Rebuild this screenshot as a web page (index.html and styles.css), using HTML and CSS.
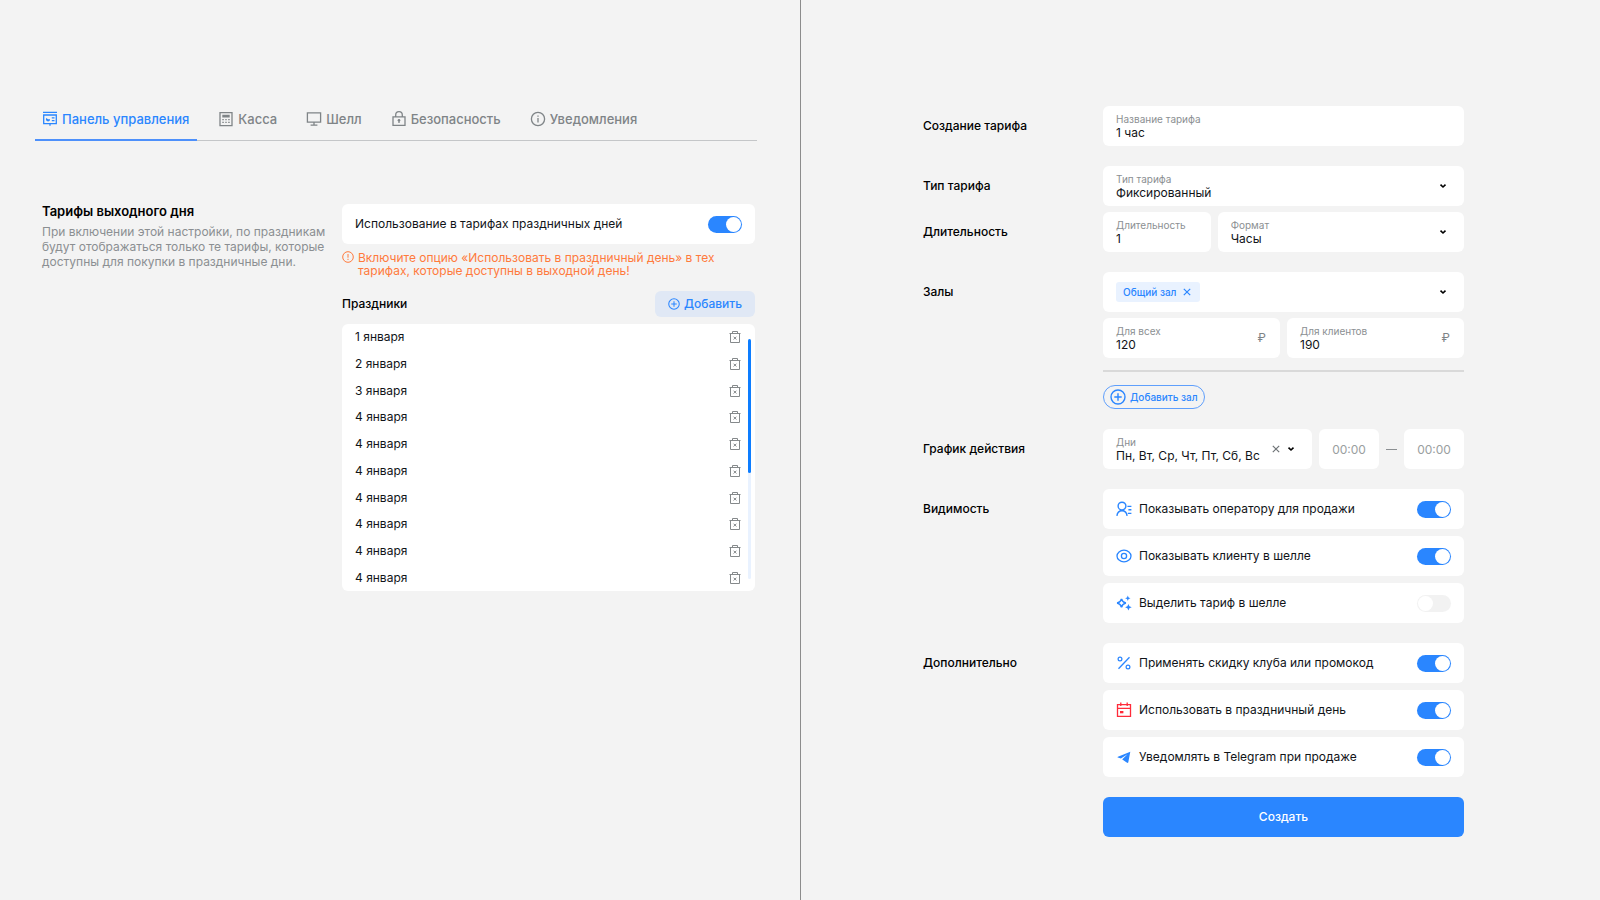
FILE: index.html
```html
<!DOCTYPE html>
<html lang="ru">
<head>
<meta charset="utf-8">
<meta name="viewport" content="width=device-width, initial-scale=1">
<title>Тарифы выходного дня</title>
<link rel="stylesheet" href="styles.css">
</head>
<body>
<svg class="sprite" aria-hidden="true">
  <symbol id="trash" viewBox="0 0 12 12"><path d="M0.500 2.500h11M3.500 2.500v-2h5v2M1.500 2.500v9h9v-9M4.600 5.700l2.800 2.800M7.400 5.700L4.600 8.500" fill="none" stroke="currentColor"/></symbol>
  <symbol id="chevron" viewBox="0 0 8 6"><path d="M1.500 1.600L4 4l2.500-2.400" fill="none" stroke="currentColor" stroke-width="1.600"/></symbol>
  <symbol id="plus" viewBox="0 0 16 16"><path d="M8 4.300v7.400M4.300 8h7.400M15 8A7 7 0 1 1 1 8a7 7 0 0 1 14 0z" fill="none" stroke="currentColor" stroke-width="1.400"/></symbol>
  <symbol id="cross" viewBox="0 0 8 8"><path d="M0.800 0.800l6.400 6.400M7.200 0.800L0.800 7.200" fill="none" stroke="currentColor" stroke-width="1.200"/></symbol>
</svg>
<div class="page">
  <main class="pane pane-settings">
    <nav class="tabs">
      <a class="tab tab-active" href="#panel"><svg class="icon" viewBox="0 0 16 16"><path d="M1 1.400h14M1.700 4h12.600v8.600H1.700zM8 12.600v2.200M9.800 6.800h2.700M9.800 9.600h2.700" fill="none" stroke="currentColor" stroke-width="1.300"/><path d="M6 6.200v2h2.100A2.100 2.100 0 1 1 4.300 7.100L6 8.200z" fill="currentColor"/></svg>Панель управления</a>
      <a class="tab" href="#cash"><svg class="icon" viewBox="0 0 16 16"><path d="M2 1.600h12v13H2z" fill="none" stroke="currentColor" stroke-width="1.300"/><path d="M4.300 3.800h7.400v2.600H4.300zM4.300 8h1.500v1.200H4.300zM7.300 8h1.400v1.200H7.300zM10.200 8h1.500v1.200h-1.500zM4.300 10.800h1.500V12H4.300zM7.300 10.800h1.400V12H7.300zM10.200 10.800h1.500V12h-1.500z" fill="currentColor"/></svg>Касса</a>
      <a class="tab" href="#shell"><svg class="icon" viewBox="0 0 16 16"><path d="M1.400 1.900h13.200v9.200H1.400zM8 11.100v3M4.600 14.100h6.800" fill="none" stroke="currentColor" stroke-width="1.300"/></svg>Шелл</a>
      <a class="tab" href="#security"><svg class="icon" viewBox="0 0 16 16"><path d="M2 5.800h12v8.600H2zM4.700 5.800V4a3.300 3.300 0 0 1 6.600 0v1.800M8 9.200V12" fill="none" stroke="currentColor" stroke-width="1.300"/><circle cx="8" cy="9.200" r="1.300" fill="currentColor"/></svg>Безопасность</a>
      <a class="tab" href="#notify"><svg class="icon" viewBox="0 0 16 16"><circle cx="8" cy="8" r="6.600" fill="none" stroke="currentColor" stroke-width="1.300"/><path d="M8 7v4.400M8 4.400v1.400" stroke="currentColor" stroke-width="1.300"/></svg>Уведомления</a>
    </nav>
    <section class="settings">
      <div class="about">
        <h1 class="title">Тарифы выходного дня</h1>
        <p class="lead">При включении этой настройки, по праздникам будут отображаться только те тарифы, которые доступны для покупки в праздничные дни.</p>
      </div>
      <div class="holidays">
        <label class="card option"><span class="option-text">Использование в тарифах праздничных дней</span><input class="switch" type="checkbox" checked></label>
        <div class="warning"><svg class="icon-small" viewBox="0 0 12 12"><circle cx="6" cy="6" r="5.300" fill="none" stroke="currentColor"/><path d="M6 3v3.700M6 7.800V9" stroke="currentColor"/></svg><p class="warning-text">Включите опцию «Использовать в праздничный день» в тех тарифах, которые доступны в выходной день!</p></div>
        <div class="list-head">
          <h2 class="subtitle">Праздники</h2>
          <button class="add" type="button"><svg class="icon-small"><use href="#plus"/></svg>Добавить</button>
        </div>
        <div class="card list-card">
          <ul class="list">
            <li class="list-row">1 января<button class="remove" type="button" aria-label="Удалить"><svg class="icon-small"><use href="#trash"/></svg></button></li>
            <li class="list-row">2 января<button class="remove" type="button" aria-label="Удалить"><svg class="icon-small"><use href="#trash"/></svg></button></li>
            <li class="list-row">3 января<button class="remove" type="button" aria-label="Удалить"><svg class="icon-small"><use href="#trash"/></svg></button></li>
            <li class="list-row">4 января<button class="remove" type="button" aria-label="Удалить"><svg class="icon-small"><use href="#trash"/></svg></button></li>
            <li class="list-row">4 января<button class="remove" type="button" aria-label="Удалить"><svg class="icon-small"><use href="#trash"/></svg></button></li>
            <li class="list-row">4 января<button class="remove" type="button" aria-label="Удалить"><svg class="icon-small"><use href="#trash"/></svg></button></li>
            <li class="list-row">4 января<button class="remove" type="button" aria-label="Удалить"><svg class="icon-small"><use href="#trash"/></svg></button></li>
            <li class="list-row">4 января<button class="remove" type="button" aria-label="Удалить"><svg class="icon-small"><use href="#trash"/></svg></button></li>
            <li class="list-row">4 января<button class="remove" type="button" aria-label="Удалить"><svg class="icon-small"><use href="#trash"/></svg></button></li>
            <li class="list-row">4 января<button class="remove" type="button" aria-label="Удалить"><svg class="icon-small"><use href="#trash"/></svg></button></li>
          </ul>
          <div class="scroll"><div class="scroll-thumb"></div></div>
        </div>
      </div>
    </section>
  </main>

  <form class="pane pane-form">
    <div class="group">
      <span class="group-name">Создание тарифа</span>
      <div class="group-body">
        <div class="card field"><div class="field-text"><label class="field-label" for="name">Название тарифа</label><input class="field-value" id="name" type="text" value="1 час"></div></div>
      </div>
    </div>
    <div class="group">
      <span class="group-name">Тип тарифа</span>
      <div class="group-body">
        <div class="card field"><div class="field-text"><label class="field-label" for="type">Тип тарифа</label><select class="field-value" id="type"><option>Фиксированный</option></select></div><svg class="chevron"><use href="#chevron"/></svg></div>
      </div>
    </div>
    <div class="group group-close">
      <span class="group-name">Длительность</span>
      <div class="group-body split-duration">
        <div class="card field"><div class="field-text"><label class="field-label" for="length">Длительность</label><input class="field-value" id="length" type="text" value="1"></div></div>
        <div class="card field"><div class="field-text"><label class="field-label" for="format">Формат</label><select class="field-value" id="format"><option>Часы</option></select></div><svg class="chevron"><use href="#chevron"/></svg></div>
      </div>
    </div>
    <div class="group">
      <span class="group-name">Залы</span>
      <div class="group-body halls">
        <div class="card field">
          <div class="field-text"><span class="chip">Общий зал<button class="chip-remove" type="button" aria-label="Убрать зал"><svg class="cross"><use href="#cross"/></svg></button></span></div>
          <button class="open" type="button" aria-label="Выбрать залы"><svg class="chevron"><use href="#chevron"/></svg></button>
        </div>
        <div class="split-price">
          <div class="card field"><div class="field-text"><label class="field-label" for="all">Для всех</label><input class="field-value" id="all" type="text" value="120"></div><span class="unit">₽</span></div>
          <div class="card field"><div class="field-text"><label class="field-label" for="clients">Для клиентов</label><input class="field-value" id="clients" type="text" value="190"></div><span class="unit">₽</span></div>
        </div>
        <div class="halls-footer">
          <button class="add-hall" type="button"><svg class="icon"><use href="#plus"/></svg>Добавить зал</button>
        </div>
      </div>
    </div>
    <div class="group">
      <span class="group-name">График действия</span>
      <div class="group-body split-time">
        <div class="card field"><div class="field-text"><label class="field-label" for="days">Дни</label><select class="field-value" id="days"><option>Пн, Вт, Ср, Чт, Пт, Сб, Вс</option></select></div><button class="clear" type="button" aria-label="Очистить"><svg class="cross"><use href="#cross"/></svg></button><svg class="chevron"><use href="#chevron"/></svg></div>
        <input class="card time" type="text" placeholder="00:00" aria-label="Начало">
        <span class="dash"></span>
        <input class="card time" type="text" placeholder="00:00" aria-label="Конец">
      </div>
    </div>
    <div class="group">
      <span class="group-name">Видимость</span>
      <div class="group-body">
        <label class="card option"><svg class="icon" viewBox="0 0 16 16"><path d="M6 1.200a3.900 3.900 0 1 1 0 7.800 3.900 3.900 0 0 1 0-7.800zM0.900 14.900c.4-3.600 2.600-5.200 5.100-5.200s4.700 1.600 5.100 5.200M11.400 5.400h4M12.400 8.700h3M11.900 12.400h3.500" fill="none" stroke="currentColor" stroke-width="1.400"/></svg><span class="option-text">Показывать оператору для продажи</span><input class="switch" type="checkbox" checked></label>
        <label class="card option"><svg class="icon" viewBox="0 0 16 16"><ellipse cx="8" cy="8" rx="7" ry="5.800" fill="none" stroke="currentColor" stroke-width="1.300"/><circle cx="8" cy="8" r="2.600" fill="none" stroke="currentColor" stroke-width="1.300"/></svg><span class="option-text">Показывать клиенту в шелле</span><input class="switch" type="checkbox" checked></label>
        <label class="card option"><svg class="icon" viewBox="0 0 16 16"><path d="M5.500 3.900Q6.300 7.300 9.900 8.100 6.300 8.900 5.500 12.400 4.700 8.900 1.100 8.100 4.700 7.300 5.500 3.900z" fill="none" stroke="currentColor" stroke-width="1.500"/><path d="M11.800 0.500l.8 1.900 1.900.8-1.900.8-.8 1.900-.8-1.900-1.900-.8 1.900-.8zM12.400 8.900l1 2.300 2.300 1-2.300 1-1 2.300-1-2.300-2.300-1 2.300-1z" fill="currentColor"/></svg><span class="option-text">Выделить тариф в шелле</span><input class="switch" type="checkbox"></label>
      </div>
    </div>
    <div class="group">
      <span class="group-name">Дополнительно</span>
      <div class="group-body">
        <label class="card option"><svg class="icon" viewBox="0 0 16 16"><path d="M13.500 2.200L2.500 13.800" stroke="currentColor" stroke-width="1.300"/><circle cx="4" cy="4" r="1.900" fill="none" stroke="currentColor" stroke-width="1.200"/><circle cx="12" cy="12" r="1.900" fill="none" stroke="currentColor" stroke-width="1.200"/></svg><span class="option-text">Применять скидку клуба или промокод</span><input class="switch" type="checkbox" checked></label>
        <label class="card option"><svg class="icon icon-red" viewBox="0 0 16 16"><path d="M1.500 2.700h13v11.600h-13zM1.500 6.300h13M4.800 0.600v3.400M11.200 0.600v3.400" fill="none" stroke="currentColor" stroke-width="1.300"/><path d="M4 9h3.400v2.300H4z" fill="currentColor"/></svg><span class="option-text">Использовать в праздничный день</span><input class="switch" type="checkbox" checked></label>
        <label class="card option"><svg class="icon" viewBox="0 0 16 16"><path d="M14.300 2.700L1.900 7.700c-.5.200-.5.700 0 .9l3 1 6.600-4.300-5.200 5 0 .3 4.800 3.200c.6.300 1 .2 1.200-.5z" fill="currentColor"/></svg><span class="option-text">Уведомлять в Telegram при продаже</span><input class="switch" type="checkbox" checked></label>
      </div>
    </div>
    <div class="group">
      <span></span>
      <button class="submit" type="submit">Создать</button>
    </div>
  </form>
</div>
</body>
</html>
```
FILE: styles.css
```css
* {
  box-sizing: border-box;
}

body {
  margin: 0;
  background: #f3f3f3;
  color: #111418;
  font: 400 12px/16px Inter, "Liberation Sans", sans-serif;
}

button,
input,
select {
  margin: 0;
  padding: 0;
  border: 0;
  background: none;
  color: inherit;
  font: inherit;
}

button {
  display: flex;
  align-items: center;
  cursor: pointer;
}

svg {
  display: block;
  flex: none;
}

.sprite {
  position: absolute;
  width: 0;
  height: 0;
}

.icon {
  width: 16px;
  height: 16px;
}

.icon-small {
  width: 12px;
  height: 12px;
}

.page {
  display: grid;
  grid-template-columns: 1fr 1fr;
  min-height: 100vh;
}

.card {
  background: #fff;
  border-radius: 6px;
}

/* Settings pane */

.pane-settings {
  padding: 99px 43px 40px 35px;
}

.tabs {
  display: flex;
  gap: 14px;
  border-bottom: 1px solid #c4c6c8;
}

.tab {
  display: flex;
  align-items: center;
  gap: 4px;
  margin-bottom: -1px;
  padding: 11px 8px 11px 7px;
  border-bottom: 2px solid transparent;
  color: #7f8487;
  font-size: 13px;
  font-weight: 500;
  line-height: 18px;
  text-decoration: none;
}

.tab-active {
  border-color: #4d90fb;
  color: #2a86ff;
}

.settings {
  display: grid;
  grid-template-columns: 300fr 413fr;
  padding: 63px 2px 0 7px;
}

.about {
  padding-right: 10px;
}

.title {
  margin: 0 0 5px;
  color: #000;
  font-size: 13px;
  font-weight: 600;
  line-height: 15px;
}

.lead {
  margin: 0;
  color: #8b8f92;
  line-height: 15px;
}

.warning {
  display: flex;
  gap: 4px;
  margin: 7px 0 14px;
  color: #ff7a3c;
  line-height: 13px;
}

.warning-text {
  margin: 0;
  padding-right: 20px;
}

.list-head {
  display: flex;
  align-items: center;
  justify-content: space-between;
  margin-bottom: 7px;
}

.subtitle {
  margin: 0;
  color: #000;
  font-size: 12px;
  font-weight: 500;
}

.add {
  gap: 4px;
  padding: 5px 13px;
  border-radius: 6px;
  background: #e0e8f5;
  color: #2a86ff;
  font-weight: 500;
}

.list-card {
  position: relative;
}

.list {
  display: grid;
  grid-auto-rows: 1fr;
  min-height: 267px;
  margin: 0;
  padding: 0 14px 0 13px;
  list-style: none;
}

.list-row {
  display: flex;
  align-items: center;
  justify-content: space-between;
}

.remove {
  color: #85898b;
}

.scroll {
  position: absolute;
  top: 15px;
  right: 4px;
  bottom: 12px;
  width: 3px;
  border-radius: 2px;
  background: #e9f2ff;
}

.scroll-thumb {
  height: 56%;
  border-radius: 2px;
  background: #0d7dff;
}

/* Tariff form pane */

.pane-form {
  padding: 106px 136px 40px 122px;
  border-left: 1px solid #8c8c8c;
}

.group {
  display: grid;
  grid-template-columns: 180px 1fr;
  margin-bottom: 20px;
}

.group:has(+ .group-close) {
  margin-bottom: 6px;
}

.group-name {
  padding-top: 12px;
  color: #000;
  font-weight: 500;
}

.group-body {
  display: grid;
  gap: 7px;
}

.field {
  display: flex;
  align-items: center;
  min-width: 0;
  min-height: 40px;
  padding: 0 14px 0 13px;
}

.field-text {
  display: flex;
  flex: 1;
  flex-direction: column;
  align-items: flex-start;
  min-width: 0;
}

.field-label {
  color: #8b8f92;
  font-size: 10px;
  line-height: 13px;
}

.field-value {
  width: 100%;
  height: 14px;
  outline: 0;
  line-height: 14px;
  appearance: none;
}

.chevron {
  width: 8px;
  height: 6px;
  margin-right: 3px;
  color: #000;
  pointer-events: none;
}

.cross {
  width: 8px;
  height: 8px;
}

.clear {
  margin-right: 7px;
  color: #6f7477;
}

.unit {
  color: #7f8487;
}

.split-duration {
  grid-template-columns: 108fr 247fr;
}

.split-price {
  display: grid;
  grid-template-columns: 1fr 1fr;
  gap: 7px;
}

.halls {
  gap: 6px;
}

.split-time {
  grid-template-columns: 1fr 60px 11px 60px;
  align-items: center;
}

.time {
  width: 100%;
  height: 40px;
  text-align: center;
}

.time::placeholder {
  color: #9a9ea0;
}

.dash {
  height: 1px;
  background: #8b8f92;
}

.chip {
  display: flex;
  align-items: center;
  gap: 7px;
  padding: 2px 9px 2px 7px;
  border-radius: 3px;
  background: #e9f2ff;
  color: #2a86ff;
  font-size: 10px;
  font-weight: 500;
}

.halls-footer {
  display: flex;
  margin-top: 6px;
  padding-top: 13px;
  border-top: 2px solid #d9d9d9;
}

.add-hall {
  gap: 4px;
  padding: 3px 6px;
  border: 1px solid #5f9ffc;
  border-radius: 12px;
  color: #2a86ff;
  font-size: 10px;
  font-weight: 500;
}

.option {
  display: flex;
  align-items: center;
  gap: 7px;
  min-height: 40px;
  padding: 0 13px;
}

.option .icon {
  color: #2a86ff;
}

.option .icon-red {
  color: #ff2b3a;
}

.option-text {
  flex: 1;
}

.switch {
  display: flex;
  width: 34px;
  height: 17px;
  padding: 1px;
  border-radius: 9px;
  background: #f2f2f2;
  appearance: none;
}

.switch::before {
  width: 15px;
  height: 15px;
  border-radius: 50%;
  background: #fff;
  content: "";
}

.switch:checked {
  justify-content: flex-end;
  background: #2a86ff;
}

.submit {
  justify-content: center;
  min-height: 40px;
  border-radius: 6px;
  background: #2a86ff;
  color: #fff;
  font-weight: 500;
}
```
